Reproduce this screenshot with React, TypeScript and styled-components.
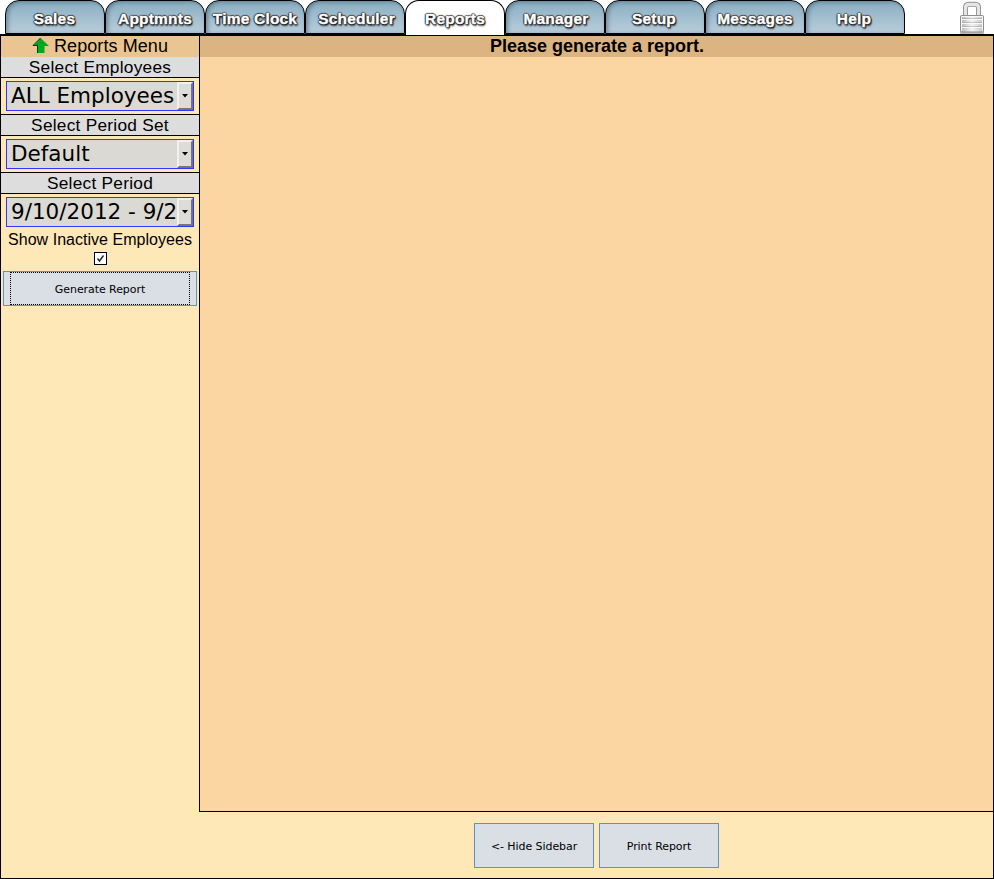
import React from 'react';
import styled, { createGlobalStyle } from 'styled-components';

const GlobalStyle = createGlobalStyle`
  * { box-sizing: border-box; }
  html, body { margin: 0; padding: 0; background: #fff; overflow: hidden; }
  body { font-family: "Liberation Sans", Arial, sans-serif; color: #000; }
`;

const Page = styled.div`
  width: 994px;
  height: 879px;
  display: flex;
  flex-direction: column;
`;

const TabBar = styled.nav`
  height: 35px;
  flex: none;
  display: flex;
  padding-left: 5px;
  background: linear-gradient(#000, #000) 0 34px / 100% 1px no-repeat, #fff;
`;

const Tab = styled.a<{ $active?: boolean }>`
  width: 100px;
  height: ${p => (p.$active ? 35 : 34)}px;
  padding: 8px 2px 0 0;
  display: flex;
  align-items: flex-start;
  justify-content: center;
  border: solid #000;
  border-width: ${p => (p.$active ? '1px 1px 0 1px' : '1px')};
  border-radius: 14px 14px 0 0;
  background: ${p => (p.$active ? '#fff' : 'linear-gradient(#89aec2, #b9cddb)')};
  box-shadow: ${p => (p.$active ? 'none' : 'inset 2px 1px 4px rgba(20, 50, 70, 0.4)')};
  cursor: pointer;
`;

const TabLabel = styled.span<{ $shift?: number }>`
  margin-left: ${p => p.$shift ?? 0}px;
  white-space: nowrap;
  font-size: 15.5px;
  letter-spacing: 0.2px;
  line-height: 19px;
  font-weight: bold;
  color: #fff;
  -webkit-text-stroke: 0.35px #fff;
  text-shadow: -1px 0 1px #222, 0 -1px 1px #222, 1px 0 1px #222, 0 1px 1px #222,
    1px 1px 1px #222, 1px 2px 2px rgba(0, 0, 0, 0.7);
`;

const LockSlot = styled.div`
  margin-left: auto;
  width: 35px;
  height: 34px;
`;

const Frame = styled.main`
  flex: 1;
  min-height: 0;
  border: 1px solid #000;
  background: #ffe8b8;
  display: grid;
  grid-template-columns: 198px 1fr;
  grid-template-rows: 776px 1fr;
`;

const Sidebar = styled.aside`
  display: flex;
  flex-direction: column;
`;

const MenuTitle = styled.div`
  height: 21px;
  background: #eac591;
  display: flex;
  justify-content: center;
  align-items: flex-start;
  gap: 5px;
  font-size: 18px;
  letter-spacing: 0.08px;
  line-height: 21px;
`;

const SectionTitle = styled.div<{ $first?: boolean }>`
  height: ${p => (p.$first ? 21 : 22)}px;
  border: solid #000;
  border-width: ${p => (p.$first ? '0 0 1px' : '1px 0')};
  background: #dddddd;
  text-align: center;
  font-size: 17.3px;
  line-height: 21px;
  letter-spacing: 0.25px;
`;

const Field = styled.div`
  height: 36px;
  padding: 3px 5px;
`;

const SelectBox = styled.div`
  width: 188px;
  height: 30px;
  border: 1px solid #3333ff;
  background: #dad9d4;
  display: flex;
  justify-content: space-between;
  cursor: default;
`;

const SelectText = styled.span`
  flex: 1;
  min-width: 0;
  white-space: nowrap;
  padding-left: 4px;
  font-family: "DejaVu Sans", sans-serif;
  font-size: 21.5px;
  line-height: 27px;
`;

const SelectArrow = styled.span`
  width: 16px;
  height: 28px;
  flex: none;
  display: flex;
  align-items: center;
  justify-content: center;
  border: 2px solid;
  border-color: #f2f1ef #76756f #76756f #f2f1ef;
  background: #dddcd8;
`;

const InactiveLabel = styled.label`
  display: flex;
  flex-direction: column;
  align-items: center;
  height: 41px;
  font-size: 16px;
  line-height: 20px;
  letter-spacing: 0.03px;
  white-space: nowrap;
`;

const CheckBox = styled.span`
  width: 13px;
  height: 13px;
  margin-top: 2px;
  border: 1px solid #000;
  background: #fff;
  display: flex;
`;

const Button = styled.button<{ $wide?: boolean }>`
  width: ${p => (p.$wide ? 194 : 120)}px;
  height: ${p => (p.$wide ? 35 : 45)}px;
  margin: ${p => (p.$wide ? '0 2px' : '0')};
  padding: ${p => (p.$wide ? '0' : '2px 0 0 1px')};
  border: 1px solid #5d94c4;
  background: #dadfe6;
  color: #000;
  font-family: "DejaVu Sans", sans-serif;
  font-size: 11px;
  letter-spacing: -0.07px;
  display: flex;
  align-items: center;
  justify-content: center;
`;

const FocusOutline = styled.span`
  width: 180px;
  height: 33px;
  padding-top: 2px;
  border: 1px dotted #000;
  display: flex;
  align-items: center;
  justify-content: center;
`;

const Report = styled.section`
  border: solid #000;
  border-width: 0 0 1px 1px;
  background: #fbd5a2;
`;

const ReportTitle = styled.h1`
  margin: 0;
  padding-left: 1px;
  height: 21px;
  background: #dbb482;
  text-align: center;
  font-size: 18px;
  line-height: 21px;
  font-weight: bold;
`;

const Footer = styled.footer`
  grid-column: 2;
  display: flex;
  justify-content: center;
  gap: 5px;
  padding-top: 11px;
`;

const Lock = () => (
  <svg width="26" height="34" viewBox="0 0 26 34">
    <defs>
      <linearGradient id="lockBody" x1="0" x2="1">
        <stop offset="0" stopColor="#b4b4b4" />
        <stop offset="0.3" stopColor="#dcdcdc" />
        <stop offset="0.5" stopColor="#f4f4f4" />
        <stop offset="1" stopColor="#c4c4c4" />
      </linearGradient>
    </defs>
    <path d="M6.5 16V8Q6.5 4.3 10 4.3H16Q19.5 4.3 19.5 8V16" fill="none" stroke="#8e8e8e" strokeWidth="5" />
    <path d="M6.5 16V8Q6.5 4.3 10 4.3H16Q19.5 4.3 19.5 8V16" fill="none" stroke="#e6e6e6" strokeWidth="3.2" />
    <path d="M1 33H25" stroke="#aaa" strokeWidth="1.5" />
    <rect x="1.5" y="15.5" width="23" height="16.5" rx="1" fill="url(#lockBody)" stroke="#8e8e8e" />
    <path d="M2.5 16.5H23.5M2.5 17V31M23.5 17V31" stroke="#f8f8f8" />
    <path d="M3 19.5H23M3 23.5H23M3 27.5H23" stroke="#fff" strokeOpacity="0.8" />
    <path d="M3 18.5H23M3 22.5H23M3 26.5H23" stroke="#999" strokeOpacity="0.5" />
  </svg>
);

const UpArrow = () => (
  <svg width="17" height="17" viewBox="0 0 17 17">
    <path d="M8.5 2L17 10H12.5V17H5V10H1Z" fill="#00a820" />
    <path d="M8.5 2L1 9.5H5.5V17" fill="none" stroke="#063b0b" />
  </svg>
);

const Select = ({ value }: { value: string }) => (
  <Field>
    <SelectBox role="combobox">
      <SelectText>{value}</SelectText>
      <SelectArrow>
        <svg width="6" height="4" viewBox="0 0 6 4"><path d="M0 0H6L3 3.5Z" /></svg>
      </SelectArrow>
    </SelectBox>
  </Field>
);

const tabs = [
  { name: 'Sales', shift: 1 },
  { name: 'Apptmnts', shift: 2 },
  { name: 'Time Clock', shift: 2 },
  { name: 'Scheduler', shift: 5 },
  { name: 'Reports', shift: 2 },
  { name: 'Manager', shift: 4 },
  { name: 'Setup' },
  { name: 'Messages', shift: 2 },
  { name: 'Help' },
];

export default function App() {
  return (
    <Page>
      <GlobalStyle />
      <TabBar>
        {tabs.map(t => (
          <Tab key={t.name} $active={t.name === 'Reports'}>
            <TabLabel $shift={t.shift}>{t.name}</TabLabel>
          </Tab>
        ))}
        <LockSlot><Lock /></LockSlot>
      </TabBar>
      <Frame>
        <Sidebar>
          <MenuTitle><UpArrow />Reports Menu</MenuTitle>
          <SectionTitle $first>Select Employees</SectionTitle>
          <Select value="ALL Employees" />
          <SectionTitle>Select Period Set</SectionTitle>
          <Select value="Default" />
          <SectionTitle>Select Period</SectionTitle>
          <Select value="9/10/2012 - 9/2" />
          <InactiveLabel>
            Show Inactive Employees
            <CheckBox role="checkbox" aria-checked="true">
              <svg width="11" height="11" viewBox="0 0 11 11">
                <path d="M2.5 5.5L4.5 8L8.5 2.5" fill="none" stroke="#222" strokeWidth="1.4" />
              </svg>
            </CheckBox>
          </InactiveLabel>
          <Button $wide><FocusOutline>Generate Report</FocusOutline></Button>
        </Sidebar>
        <Report>
          <ReportTitle>Please generate a report.</ReportTitle>
        </Report>
        <Footer>
          <Button>&lt;- Hide Sidebar</Button>
          <Button>Print Report</Button>
        </Footer>
      </Frame>
    </Page>
  );
}
